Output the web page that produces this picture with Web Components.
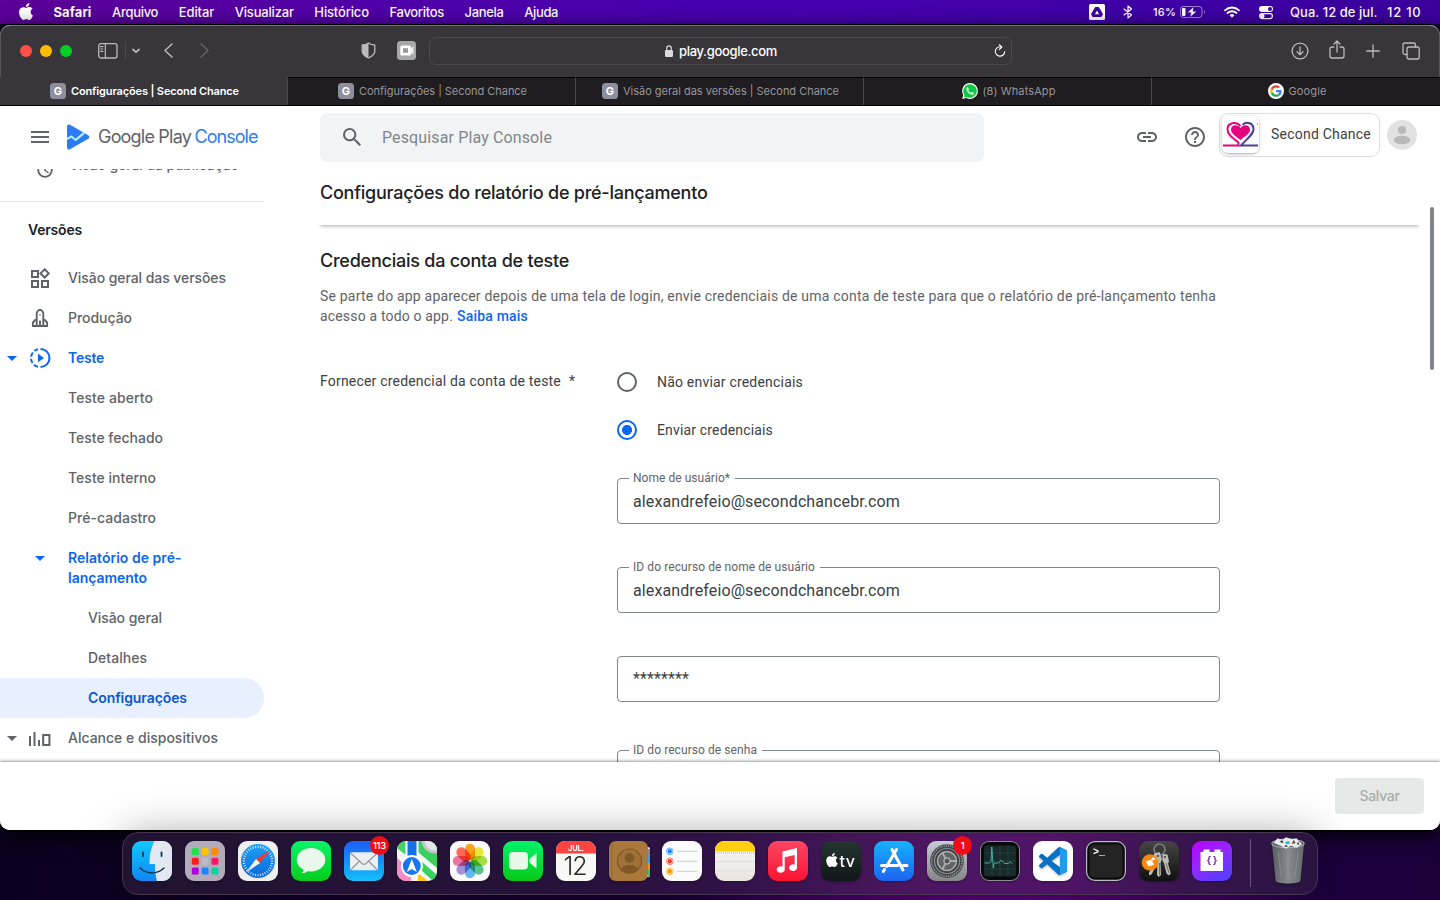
<!DOCTYPE html>
<html lang="pt-BR">
<head>
<meta charset="utf-8">
<title>Configurações | Second Chance</title>
<style>
html,body{margin:0;height:100%;overflow:hidden}
body{font-family:Inter,"Liberation Sans",sans-serif}
</style>
</head>
<body>
<mac-desktop></mac-desktop>
<script>
const APPLE='<path d="M12.152 6.896c-.948 0-2.415-1.078-3.96-1.04-2.04.027-3.91 1.183-4.961 3.014-2.117 3.675-.546 9.103 1.519 12.09 1.013 1.454 2.208 3.09 3.792 3.039 1.52-.065 2.09-.987 3.935-.987 1.831 0 2.35.987 3.96.948 1.637-.026 2.676-1.48 3.676-2.948 1.156-1.688 1.636-3.325 1.662-3.415-.039-.013-3.182-1.221-3.22-4.857-.026-3.04 2.48-4.494 2.597-4.559-1.429-2.09-3.623-2.324-4.39-2.376-2-.156-3.675 1.09-4.61 1.09zM15.53 3.83c.843-1.012 1.4-2.427 1.245-3.83-1.207.052-2.662.805-3.532 1.818-.78.896-1.454 2.338-1.273 3.714 1.338.104 2.715-.688 3.559-1.701"/>';
const S='fill="none" stroke="currentColor" stroke-linecap="round" stroke-linejoin="round"';
/* name: [width, height, markup] ; the viewBox equals the drawn size unless a fourth entry names one */
const ICONS={
apple:[16,17,APPLE,'1 0 22 24'],
drive:[16,16,'<rect width="16" height="16" rx="1.5" fill="#fff"/><path d="M6.2 3h3.6L14 10.2 12.3 13H3.7L2 10.2z" fill="#3c009e"/><path d="M8 6.4l2.2 3.8H5.8z" fill="#fff"/>'],
bluetooth:[10,14,`<path d="M1 4l7.500 6L5 13V1l3.500 3L1 10" ${S} stroke-width="1.2"/>`],
battery:[26,12,'<rect x=".5" y=".5" width="21.500" height="11" rx="3" fill="none" stroke="#fff" stroke-opacity=".5"/><rect x="2" y="2" width="3.500" height="8" rx="1" fill="#fff"/><path d="M24 4v4c1.200-.6 1.200-3.400 0-4z" fill="#fff" opacity=".5"/><path d="M14 .5L7 6.700h4L9.800 11.500 17 5.300h-4z" fill="#fff" stroke="#3f00a6" stroke-width=".6"/>'],
wifi:[16,12,`<path d="M1 4.300a10.200 10.200 0 0 1 14 0M3.500 7a6.600 6.600 0 0 1 9 0" ${S} stroke-width="1.800"/><path d="M8 11.700L5.500 9.200a3.600 3.600 0 0 1 5 0z" fill="currentColor"/>`],
control:[14,13,'<rect width="14" height="6" rx="3" fill="#fff"/><circle cx="11" cy="3" r="2" fill="#3f00a6"/><rect x=".6" y="7.600" width="12.800" height="5" rx="2.500" fill="none" stroke="#fff" stroke-width="1.200"/><circle cx="3.300" cy="10.100" r="2.300" fill="#fff"/>'],
panel:[20,16,`<rect x=".7" y=".7" width="18.300" height="14.300" rx="2.200" ${S} stroke-width="1.300"/><path d="M7.300 1v14M2.600 3.700h2.300M2.600 6h2.300M2.600 8.300h2.300" ${S} stroke-width="1.200"/>`],
chevDown:[8,6,`<path d="M1 1.500l3 2.700 3-2.700" ${S} stroke-width="1.700"/>`],
back:[9,15,`<path d="M8 1L1 7.500 8 14" ${S} stroke-width="1.500"/>`],
fwd:[9,15,`<path d="M1 1l7 6.500L1 14" ${S} stroke-width="1.500"/>`],
shield:[15,17,`<path d="M7.500 1C9.500 2.500 11.500 3 13.800 3v6c0 3-2.500 5.400-6.300 7C3.700 14.400 1.200 12 1.200 9V3C3.500 3 5.500 2.500 7.500 1z" ${S} stroke-width="1.300"/><path d="M7.500 1C5.500 2.500 3.500 3 1.200 3v6c0 3 2.500 5.400 6.300 7z" fill="currentColor"/>`],
cam:[19,19,'<rect width="19" height="19" rx="3.500" fill="#a7a6a8"/><rect x="3.300" y="4.500" width="10.700" height="10" rx="1.500" fill="#fff"/><path d="M13.500 8L16.500 5v9l-3-3z" fill="#eee"/><rect x="6" y="7.200" width="5" height="4.600" fill="#9a999b"/>'],
lock:[8,12,'<rect x="0" y="5" width="8" height="7" rx="1.300" fill="currentColor"/><path d="M1.700 5.500V3.200a2.300 2.300 0 0 1 4.600 0v2.300" fill="none" stroke="currentColor" stroke-width="1.200"/>'],
reload:[12,13,`<path d="M7.500 3A4.700 4.700 0 1 0 10.700 7.500M5.300 .6L7.900 3.100 5.300 5.500" ${S} stroke-width="1.100"/>`],
download:[18,18,`<circle cx="9" cy="9" r="7.900" ${S} stroke-width="1.300"/><path d="M9 5v7.500M6 9.800l3 2.900 3-2.900" ${S} stroke-width="1.300"/>`],
share:[16,19,`<path d="M5 7H3a2 2 0 0 0-2 2v7a2 2 0 0 0 2 2h10a2 2 0 0 0 2-2V9a2 2 0 0 0-2-2h-2M8 12V1.200M5 4l3-3 3 3" ${S} stroke-width="1.300"/>`],
plus:[14,14,`<path d="M7 .8v12.400M.8 7h12.400" ${S} stroke-width="1.300"/>`],
tabs:[18,18,`<rect x="5" y="5" width="12.200" height="12" rx="2" ${S} stroke-width="1.300"/><path d="M5 12.500H3a2 2 0 0 1-2-2V3a2 2 0 0 1 2-2h8.500a2 2 0 0 1 2 2v2" ${S} stroke-width="1.300"/>`],
whatsapp:[16,16,'<path d="M8 0a8 8 0 1 1-3.700 15.100L.2 16l1-4A8 8 0 0 1 8 0z" fill="#fff"/><path d="M8 1.200a6.800 6.800 0 1 1-3.400 12.700l-2.800.7.700-2.700A6.800 6.800 0 0 1 8 1.200z" fill="#12c945"/><path d="M5.700 4.300c-.9.200-1.500 1.200-1 2.600.7 2 2.200 3.700 4.500 4.600 1.300.5 2.600-.1 2.700-1.400L10 9.100l-.9 1C7.700 9.500 6.800 8.600 6.200 7.300l.7-.9z" fill="#fff"/>'],
google:[16,16,'<circle cx="24" cy="24" r="24" fill="#fff"/><g transform="translate(6.500 6.500) scale(.73)"><path fill="#EA4335" d="M24 9.500c3.540 0 6.710 1.220 9.210 3.600l6.850-6.850C35.900 2.380 30.470 0 24 0 14.620 0 6.510 5.380 2.560 13.220l7.980 6.190C12.430 13.720 17.740 9.500 24 9.500z"/><path fill="#4285F4" d="M46.980 24.550c0-1.570-.15-3.090-.38-4.550H24v9.020h12.940c-.58 2.960-2.260 5.480-4.780 7.180l7.730 6c4.510-4.180 7.090-10.360 7.090-17.650z"/><path fill="#FBBC05" d="M10.530 28.590c-.48-1.450-.76-2.990-.76-4.590s.27-3.140.76-4.590l-7.980-6.190C.92 16.460 0 20.120 0 24c0 3.880.92 7.540 2.560 10.780l7.970-6.190z"/><path fill="#34A853" d="M24 48c6.480 0 11.930-2.130 15.890-5.810l-7.730-6c-2.150 1.450-4.920 2.300-8.160 2.300-6.260 0-11.570-4.220-13.470-9.910l-7.980 6.190C6.510 42.620 14.620 48 24 48z"/></g>','0 0 48 48'],
menu:[18,12,'<path d="M0 0h18v2H0zM0 5h18v2H0zM0 10h18v2H0z" fill="currentColor"/>'],
play:[23,26,'<path d="M0 2.500C0 .8 1.600-.1 3 .7l18.200 10.500c1.500.9 1.500 2.700 0 3.600L3 25.300C1.600 26.100 0 25.200 0 23.500z" fill="#2a7bf6"/><path d="M0 13.800l4.500-2.600 4 3.600L15.800 8.400l2.200 1.300L8.700 17.200 4.400 13.700 0 15.900z" fill="#b5f1ff"/>'],
search:[18,18,'<path d="M15.500 14h-.79l-.28-.27A6.471 6.471 0 0 0 16 9.500 6.500 6.500 0 1 0 9.500 16c1.610 0 3.090-.59 4.230-1.570l.27.28v.79l5 4.990L20.490 19l-4.990-5zm-6 0C7.010 14 5 11.990 5 9.500S7.010 5 9.500 5 14 7.010 14 9.500 11.990 14 9.500 14z" fill="currentColor"/>','3 3 17.500 17.500'],
link:[20,10,'<path d="M3.900 12c0-1.710 1.390-3.100 3.100-3.100h4V7H7c-2.760 0-5 2.240-5 5s2.240 5 5 5h4v-1.900H7c-1.710 0-3.100-1.390-3.100-3.100zM8 13h8v-2H8v2zm9-6h-4v1.900h4c1.710 0 3.100 1.390 3.100 3.100s-1.390 3.100-3.100 3.100h-4V17h4c2.760 0 5-2.240 5-5s-2.240-5-5-5z" fill="currentColor"/>','2 7 20 10'],
help:[20,20,'<path d="M11 18h2v-2h-2v2zm1-16C6.480 2 2 6.480 2 12s4.480 10 10 10 10-4.480 10-10S17.520 2 12 2zm0 18c-4.410 0-8-3.590-8-8s3.590-8 8-8 8 3.590 8 8-3.590 8-8 8zm0-14c-2.210 0-4 1.790-4 4h2c0-1.100.9-2 2-2s2 .9 2 2c0 2-3 1.750-3 5h2c0-2.250 3-2.500 3-5 0-2.210-1.790-4-4-4z" fill="currentColor"/>','2 2 20 20'],
heart:[37,37,`<rect width="37" height="37" rx="6" fill="#fff"/><path d="M18.500 24C12 19 9 17 9 13.500c0-5 6.500-6 9.500-1.500 3-4.500 9.500-3.500 9.500 1.500 0 3.500-3 5.500-9.500 10.500z" fill="#e6007e"/><path d="M1 29.500h15.500v-3C9 20.500 5.500 18 5.500 13.200 5.500 6.800 14 5 18.500 10" fill="none" stroke="#e6007e" stroke-width="2"/><path d="M20.500 8.800C25 5 31.500 7 31.500 13.200c0 4.800-5 8-12.500 16.300h17" fill="none" stroke="#4a3c97" stroke-width="2"/><path d="M35 7h1v1.500h-1z" fill="#8889b5"/>`],
avatar:[30,30,'<circle cx="15" cy="15" r="15" fill="#e2e2e2"/><circle cx="15" cy="10" r="4" fill="#b9b9b9"/><ellipse cx="15" cy="20" rx="8.300" ry="4.300" fill="#b9b9b9"/>'],
clock:[16,16,`<circle cx="8" cy="8" r="6.800" ${S} stroke-width="1.800"/><path d="M8 4v4.500l3 2" ${S} stroke-width="1.500"/>`],
widgets:[20,20,'<path d="M2 3h6v6H2zM2 13h6v6H2zM12 13h6v6h-6zM14.600 1.300l4.100 4.100-4.100 4.100-4.100-4.100z" fill="none" stroke="currentColor" stroke-width="2"/>'],
rocket:[18,20,'<path d="M5.700 18V6C5.700 3.500 7.500 2 9 2s3.300 1.500 3.300 4v12M5.700 10.500L1.900 14.500V18h14.200v-3.500l-3.800-4M9 12.500v5.500" fill="none" stroke="currentColor" stroke-width="1.900"/><circle cx="9" cy="7" r=".8" fill="currentColor"/>'],
teste:[20,20,`<path d="M10.500 1a9 9 0 0 1 0 18" fill="none" stroke="currentColor" stroke-width="2"/><path d="M8 18.800a9 9 0 0 1-7-8.800 9 9 0 0 1 7-8.800" fill="none" stroke="currentColor" stroke-width="2" stroke-dasharray="4.500 2.200"/><path d="M8 5.800v8.400l6-4.200z" fill="currentColor"/>`],
reach:[22,15,'<path d="M1 5v10M5.500 1v14M10 9v6" stroke="currentColor" stroke-width="2" fill="none"/><rect x="14.200" y="4" width="6.200" height="10" fill="none" stroke="currentColor" stroke-width="2"/>'],
caret:[10,5,'<path d="M0 0h10L5 5z" fill="currentColor"/>']
};
const ID=(()=>{let n=0;return()=>'g'+(n++)})();
function define(name,html,setup){
  const t=document.createElement('template');t.innerHTML=html;
  customElements.define(name,class extends HTMLElement{
    connectedCallback(){
      if(this.shadowRoot)return;
      const r=this.attachShadow({mode:'open'});
      r.append(document.importNode(t.content,true));
      if(setup)setup.call(this,r);
    }
  });
}
const svg=([w,h,m,vb])=>`<svg width="${w}" height="${h}" viewBox="${vb||`0 0 ${w} ${h}`}" fill="currentColor">${m}</svg>`;

define('mac-desktop',`<style>
:host{display:flex;flex-direction:column;width:1440px;height:900px;overflow:hidden;
background:linear-gradient(90deg,#0c0020,#16002f 30%,#1d0040 60%,#520078 70%,#3c0064 78%,#1d0040 92%,#1b003c)}
.dock{flex:1;display:flex;justify-content:center;align-items:flex-start;padding-top:2px;position:relative;
background:radial-gradient(ellipse 330px 60px at 1000px 75px,#6d0090 0,#4b0070 50%,transparent 100%)}
</style><menu-bar></menu-bar><browser-window></browser-window><div class="dock"><app-dock></app-dock></div>`);

define('menu-bar',`<style>
:host{display:flex;align-items:center;height:24px;color:#fff;font-size:13px;font-weight:500;line-height:24px;
background:linear-gradient(90deg,#5b0098,#4f00ab 30%,#4600b0 55%,#3f00a6 80%,#3b009c)}
nav{display:flex;gap:20.600px;margin-left:19.500px;flex:1}
.st{display:flex;align-items:center;margin-right:18.500px}
ui-icon{margin-left:18px;margin-top:-1px}.st ui-icon{margin-left:0;margin-top:0}
</style>
<ui-icon name="apple"></ui-icon>
<nav><fit-text w="38" style="font-weight:700">Safari</fit-text><fit-text w="46">Arquivo</fit-text><fit-text w="35.500">Editar</fit-text><fit-text w="59">Visualizar</fit-text><fit-text w="54.500">Histórico</fit-text><fit-text w="54.500">Favoritos</fit-text><fit-text w="39">Janela</fit-text><fit-text w="34">Ajuda</fit-text></nav>
<div class="st"><ui-icon name="drive"></ui-icon><ui-icon name="bluetooth" style="margin-left:18px"></ui-icon><fit-text w="23" style="margin-left:20px;font-size:11px">16%</fit-text><ui-icon name="battery" style="margin-left:4px"></ui-icon><ui-icon name="wifi" style="margin-left:18px"></ui-icon><ui-icon name="control" style="margin-left:19px"></ui-icon><fit-text w="87.500" style="margin-left:17px">Qua. 12 de jul.</fit-text><fit-text w="34.500" style="margin-left:9.500px">12 10</fit-text></div>`);

define('ui-icon',`<style>:host{display:block;flex:none}svg{display:block;overflow:visible}</style>`,function(r){
  r.append(document.createRange().createContextualFragment(svg(ICONS[this.getAttribute('name')])));
});

define('browser-window',`<style>
:host{display:flex;flex-direction:column;height:805px;margin-top:1px;border-radius:10px;overflow:hidden;background:#fff;box-shadow:0 0 0 1px #000,0 6px 22px #000;flex:none}
</style><browser-toolbar></browser-toolbar><tab-strip></tab-strip><play-console></play-console>`);

define('browser-toolbar',`<style>
:host{display:flex;align-items:center;height:52px;background:#38363a;color:#bcbabd;box-sizing:border-box;border-top:1px solid #757377;padding-bottom:2px;border-radius:10px 10px 0 0;box-shadow:inset 1px 0 #565458,inset -1px 0 #565458}
i{display:block;width:12px;height:12px;border-radius:50%;margin-right:8px}
.url{display:flex;align-items:center;width:583px;height:28px;box-sizing:border-box;border:1px solid #4c4a4e;border-radius:7px;margin-left:13px;font-size:13px;font-weight:500;color:#fff}
.mid{flex:1;display:flex;align-items:center;justify-content:center;padding-left:18px}
</style>
<i style="background:#ff5047;margin-left:20px"></i><i style="background:#febc00"></i><i style="background:#05cf27"></i>
<ui-icon name="panel" style="margin-left:18px"></ui-icon>
<span style="width:1px;height:18px;background:#4b494d;margin-left:7px"></span>
<ui-icon name="chevDown" style="margin-left:6px"></ui-icon>
<ui-icon name="back" style="margin-left:24px"></ui-icon>
<ui-icon name="fwd" style="margin-left:27px;color:#656367"></ui-icon>
<ui-icon name="shield" style="margin-left:152px"></ui-icon>
<ui-icon name="cam" style="margin-left:21px"></ui-icon>
<div class="url"><div class="mid"><ui-icon name="lock" style="margin-right:6px;color:#dcdadd"></ui-icon><fit-text w="98">play.google.com</fit-text></div><ui-icon name="reload" style="margin-right:5px"></ui-icon></div>
<ui-icon name="download" style="margin-left:279px"></ui-icon>
<ui-icon name="share" style="margin-left:20px;margin-top:-3px"></ui-icon>
<ui-icon name="plus" style="margin-left:21px"></ui-icon>
<ui-icon name="tabs" style="margin-left:22px"></ui-icon>`);

define('tab-strip',`<style>
:host{display:grid;grid-template-columns:repeat(5,1fr);height:28px;background:#1f1d20;border-bottom:1px solid #000;flex:none}
</style>
<browser-tab active><b slot="i">G</b><fit-text w="168">Configurações | Second Chance</fit-text></browser-tab>
<browser-tab><b slot="i">G</b><fit-text w="168">Configurações | Second Chance</fit-text></browser-tab>
<browser-tab><b slot="i">G</b><fit-text w="216">Visão geral das versões | Second Chance</fit-text></browser-tab>
<browser-tab><ui-icon slot="i" name="whatsapp"></ui-icon><fit-text w="73">(8) WhatsApp</fit-text></browser-tab>
<browser-tab><ui-icon slot="i" name="google"></ui-icon><fit-text w="38">Google</fit-text></browser-tab>`);
define('browser-tab',`<style>
:host{display:flex;align-items:center;justify-content:center;gap:5px;font-size:11px;font-weight:400;color:#98969a;line-height:26px;border-top:1px solid #000;border-right:1px solid #4a484c;box-sizing:border-box;padding:0 0 1px 2px;height:28px;overflow:hidden}
:host([active]){background:#38363a;color:#fff;font-weight:600;border-top-color:#38363a}
:host(:last-of-type){border-right:0}
::slotted(b){width:16px;height:16px;border-radius:3.500px;background:#8e8e9e;color:#fff;font:700 11px/17px Inter,sans-serif;text-align:center}
</style><slot name="i"></slot><slot></slot>`);

define('play-console',`<style>
:host{display:flex;flex-direction:column;flex:1;min-height:0;background:#fff}
.body{display:flex;flex:1;min-height:0;overflow:hidden}
main{flex:1;min-width:0;padding-left:50px;overflow:hidden;position:relative}
settings-page{margin-left:6px}
.bar{position:absolute;right:6px;top:38px;width:4px;height:163px;border-radius:2px;background:#80868b}
</style><console-header></console-header><div class="body"><side-nav></side-nav><main><settings-page></settings-page><div class="bar"></div></main></div><save-bar></save-bar>`);

define('console-header',`<style>
:host{display:flex;align-items:flex-start;height:63px;color:#5f6368;flex:none;box-sizing:border-box;padding-top:7px}
.logo{display:flex;align-items:center;width:300px;height:48px;padding-left:31px;box-sizing:border-box;flex:none;font:400 18px/48px Inter,sans-serif;margin-right:20px}
.search{display:flex;align-items:center;width:664px;height:49px;background:#f1f3f4;border-radius:8px;font:400 16px/49px Roboto,sans-serif;color:#80868b;box-sizing:border-box;padding-left:23px}
.app{display:flex;align-items:center;width:161px;height:44px;box-sizing:border-box;border:1px solid #dadce0;border-radius:9px;font:400 14px/40px Roboto,sans-serif;color:#3c4043;margin:0 7px 0 14px;padding-bottom:2px}
.t{border-radius:7px;box-shadow:0 1px 3px rgba(0,0,0,.35);margin:1px 12px 0 2px}
</style>
<div class="logo"><ui-icon name="menu"></ui-icon><ui-icon name="play" style="margin:0 8px 0 18px"></ui-icon><fit-text w="93">Google Play</fit-text><fit-text w="63" style="color:#2a7bf6;margin-left:3.500px">Console</fit-text></div>
<div class="search"><ui-icon name="search" style="color:#5f6368;margin-right:21px;margin-top:-2px"></ui-icon><fit-text w="170">Pesquisar Play Console</fit-text></div>
<ui-icon name="link" style="margin:19px 0 0 153px"></ui-icon><ui-icon name="help" style="margin:14px 0 0 28px"></ui-icon>
<div class="app"><ui-icon class="t" name="heart"></ui-icon><fit-text w="100">Second Chance</fit-text></div><ui-icon name="avatar" style="margin-top:7px"></ui-icon>`);

define('side-nav',`<style>
:host{display:block;width:264px;flex:none;overflow:hidden}
.in{margin-top:-24px}
hr{border:0;height:1px;background:#e3e5e9;margin:16px 0 8px}
h2{margin:0 0 8px;padding-left:28px;font:600 14px/40px Inter,sans-serif;color:#202124}
</style><div class="in">
<nav-item icon="clock" pub><fit-text w="170">Visão geral da publicação</fit-text></nav-item><hr>
<h2><fit-text w="54">Versões</fit-text></h2>
<nav-item icon="widgets"><fit-text w="158">Visão geral das versões</fit-text></nav-item>
<nav-item icon="rocket"><fit-text w="64">Produção</fit-text></nav-item>
<nav-item icon="teste" caret on><fit-text w="36">Teste</fit-text></nav-item>
<nav-item><fit-text w="85">Teste aberto</fit-text></nav-item>
<nav-item><fit-text w="95">Teste fechado</fit-text></nav-item>
<nav-item><fit-text w="88">Teste interno</fit-text></nav-item>
<nav-item><fit-text w="88">Pré-cadastro</fit-text></nav-item>
<nav-item icon="caret" on><fit-text w="113.500">Relatório de pré-</fit-text><br><fit-text w="79">lançamento</fit-text></nav-item>
<nav-item deep><fit-text w="74">Visão geral</fit-text></nav-item>
<nav-item deep><fit-text w="59">Detalhes</fit-text></nav-item>
<nav-item deep sel><fit-text w="99">Configurações</fit-text></nav-item>
<nav-item icon="reach" caret><fit-text w="150">Alcance e dispositivos</fit-text></nav-item></div>`);
define('nav-item',`<style>
:host{display:flex;min-height:40px;padding:10px 0;box-sizing:border-box;color:#5f6368;font:500 14px/20px Inter,sans-serif}
:host([on]){color:#0b66f0;font-weight:600}
:host([sel]){background:#e8effe;color:#0b57d0;border-radius:0 20px 20px 0;font-weight:600}
.c{width:24px;height:20px;display:flex;align-items:center;justify-content:center}
.i{width:32px;height:20px;display:flex;align-items:center;justify-content:center;margin-right:12px}
:host([deep]) .i{width:52px}
:host([pub]) .i{padding-left:9px;width:32px;margin-right:13px;box-sizing:border-box;padding-top:9px}
</style><div class="c"></div><div class="i"></div><div><slot></slot></div>`,function(r){
  const n=this.getAttribute('icon');
  if(n)r.querySelector('.i').innerHTML=`<ui-icon name="${n}"></ui-icon>`;
  if(this.hasAttribute('caret'))r.querySelector('.c').innerHTML='<ui-icon name="caret"></ui-icon>';
});

define('settings-page',`<style>
:host{display:block;color:#202124;font:400 14px/20px Roboto,sans-serif}
h1,h2{margin:0;font:500 18px/24px Inter,sans-serif}
h1{padding:12px 0 20px;width:1100px}
.edge{height:4px;width:1103px;margin:0 0 -4px -2px;background:linear-gradient(#c9c9c9,#e0e0e0 45%,#fff);-webkit-mask:linear-gradient(90deg,transparent,#000 5px,#000 1098px,transparent)}
h2{margin-top:24px}
p{margin:13px 0 0;color:#5f6368}
a{color:#0b66f0;font-weight:500}
.row{display:flex;margin-top:44px}
.lab{width:297px;flex:none;padding-top:1px;color:#3c4043}
.f{width:603px}
outlined-field{margin-bottom:43px}
</style>
<h1><fit-text w="387.500">Configurações do relatório de pré-lançamento</fit-text></h1><div class="edge"></div>
<h2><fit-text w="249">Credenciais da conta de teste</fit-text></h2>
<p><fit-text w="896">Se parte do app aparecer depois de uma tela de login, envie credenciais de uma conta de teste para que o relatório de pré-lançamento tenha</fit-text><br><fit-text w="133">acesso a todo o app.</fit-text><a><fit-text w="71" style="margin-left:4px">Saiba mais</fit-text></a></p>
<div class="row"><div class="lab"><fit-text w="241">Fornecer credencial da conta de teste</fit-text><span style="margin-left:8px">*</span></div>
<div class="f"><radio-option><fit-text w="146">Não enviar credenciais</fit-text></radio-option>
<radio-option checked><fit-text w="116">Enviar credenciais</fit-text></radio-option>
<outlined-field><fit-text slot="l" w="97">Nome de usuário*</fit-text><fit-text w="267">alexandrefeio@secondchancebr.com</fit-text></outlined-field>
<outlined-field><fit-text slot="l" w="182">ID do recurso de nome de usuário</fit-text><fit-text w="267">alexandrefeio@secondchancebr.com</fit-text></outlined-field>
<outlined-field bare><fit-text w="56">********</fit-text></outlined-field>
<outlined-field style="margin-top:48px"><fit-text slot="l" w="124">ID do recurso de senha</fit-text></outlined-field>
</div></div>`);
define('radio-option',`<style>
:host{display:flex;align-items:center;height:20px;margin:2px 0 28px;gap:20px;color:#3c4043}
i{width:20px;height:20px;box-sizing:border-box;border:2px solid #5f6368;border-radius:50%;display:block}
:host([checked]){margin-bottom:38px;margin-top:0}
:host([checked]) i{border-color:#0b66f0;background:radial-gradient(circle,#0b66f0 0 4.700px,transparent 5.300px)}
</style><i></i><slot></slot>`);
define('outlined-field',`<style>
:host{display:block;height:46px;box-sizing:border-box;border:1px solid #80868b;border-radius:4px;position:relative;font:400 16px/46px Roboto,sans-serif;color:#3c4043;padding:0 15px}
.l{position:absolute;left:11px;top:-9px;background:#fff;padding:0 5px 0 4px;font:400 12px/16px Roboto,sans-serif;color:#5f6368}
:host([bare]){line-height:44px}
:host([bare]) .l{display:none}
</style><div class="l"><slot name="l"></slot></div><slot></slot>`);
define('save-bar',`<style>
:host{display:flex;justify-content:flex-end;align-items:flex-start;height:68px;padding:16px 16px 0;box-sizing:border-box;background:#fff;box-shadow:0 -1px 3px rgba(0,0,0,.4);flex:none;position:relative;z-index:1}
button{width:89px;height:36px;border:0;border-radius:4px;background:#e7e9e8;color:#aaacae;font:500 14px/36px Inter,sans-serif;padding:0}
</style><button><fit-text w="40">Salvar</fit-text></button>`);

const squircle=(fill)=>`<rect width="40" height="40" rx="9" fill="${fill}"/>`;
const grad=(id,a,b)=>`<linearGradient id="${id}" x2="0" y2="1"><stop stop-color="${a}"/><stop offset="1" stop-color="${b}"/></linearGradient>`;
const petals=['#ff9a10','#ece22c','#9fdc35','#4cc07e','#55b0f0','#9d85d6','#ea6a9c','#ff5a48'].map((c,i)=>`<rect x="15" y="2.800" width="10" height="16.500" rx="5" fill="${c}" style="mix-blend-mode:multiply" opacity=".92" transform="rotate(${i*45} 20 20)"/>`).join('');
const dots=['#1fe04a','#ffc400','#ff8a00','#ff1a1a','#b9bcc4','#ff1668','#b400e0','#1b86ff','#00d6a0'].map((c,i)=>`<rect x="${6.8+(i%3)*9.8}" y="${7+Math.floor(i/3)*9.7}" width="7" height="7" rx="1.500" fill="${c}"/>`).join('');
const ticks=Array.from({length:36},(_,i)=>`<path d="M20 4.500v2.500" stroke="#fff" stroke-width=".8" transform="rotate(${i*10} 20 20)"/>`).join('');
const APPS={
finder:g=>grad(g,'#10c8fc','#1286f5')+squircle(`url(#${g})`)+'<path d="M22.500 0H31a9 9 0 0 1 9 9v22a9 9 0 0 1-9 9h-6c-1.500-5-2-10-2-17h-5.500C17.500 14 19 7 22.500 0z" fill="#e2e7f0"/><path d="M11 11.500v3.500M29.500 11.500v3.500" stroke="#17344f" stroke-width="1.800" stroke-linecap="round"/><path d="M8 27c7 6.500 17 6.500 24 0" fill="none" stroke="#17344f" stroke-width="1.500" stroke-linecap="round"/>',
launch:g=>squircle('#b1abba')+dots,
safari:g=>grad(g,'#1ea2f5','#0a66dd')+squircle('#efefef')+`<circle cx="20" cy="20" r="17" fill="url(#${g})"/>${ticks}<path d="M32.500 9L22 22l-4-4z" fill="#f33a34"/><path d="M8 31.500L22 22l-4-4z" fill="#f4f4f4"/>`,
messages:g=>grad(g,'#0cf468','#05cd1c')+squircle(`url(#${g})`)+'<ellipse cx="20" cy="18.700" rx="14.300" ry="11.700" fill="#e9f8ea"/><path d="M13 27c.2 2-.8 4-2.500 5.300 3 0 5.500-1 7-3z" fill="#e9f8ea"/>',
mail:g=>grad(g,'#1d5df5','#14c1fd')+squircle(`url(#${g})`)+'<rect x="6" y="11.300" width="28" height="18" rx="2" fill="#eceff2"/><path d="M7 12.500l11 10c1.300 1 2.700 1 4 0l11-10M7 28.500l8.500-8.500M33 28.500L24.500 20" fill="none" stroke="#9298a0" stroke-width="1.200"/>',
maps:g=>`<clipPath id="${g}"><rect width="40" height="40" rx="9"/></clipPath><g clip-path="url(#${g})"><rect width="40" height="40" fill="#f4f5f3"/><path d="M0 17l14 12v11H0z" fill="#f58cc5"/><path d="M0 7l10 8V0H0z" fill="#45d264"/><path d="M21 0h19v27L21 11z" fill="#3ad05d"/><circle cx="38" cy="-1" r="12" fill="#e4e6e9" stroke="#c3c6cb" stroke-width="3"/><path d="M24 20l16 14v6h-4L22 27z" fill="#37d160"/><path d="M21 32l10 8H21z" fill="#ffc814"/><rect x="8.500" y="0" width="13" height="20" fill="#fff"/><rect x="10.500" y="0" width="9" height="18" fill="#1570ea"/><circle cx="14.800" cy="25" r="11" fill="#fff"/><circle cx="14.800" cy="25" r="9" fill="#1877ee"/><path d="M14.800 18l5 13-5-3-5 3z" fill="#fff"/></g>`,
photos:g=>squircle('#fbfbfb')+`<g style="isolation:isolate">${petals}</g>`,
facetime:g=>grad(g,'#05f36a','#05c916')+squircle(`url(#${g})`)+'<rect x="6" y="11" width="19" height="17.500" rx="4" fill="#e7f7e8"/><path d="M26.500 18L33.500 12v15.500L26.500 21.500z" fill="#e7f7e8"/>',
calendar:g=>squircle('#f8f8f7')+'<path d="M0 12.500V9a9 9 0 0 1 9-9h22a9 9 0 0 1 9 9v3.500z" fill="#fb4540"/><text x="12" y="9.600" font-family="Inter,sans-serif" font-weight="700" font-size="7.500" fill="#fff" textLength="16">JUL.</text><text x="7.500" y="34" font-family="Inter,sans-serif" font-weight="300" font-size="25" fill="#2b2b2b" textLength="24">12</text>',
contacts:g=>'<rect x="30" y="6" width="11" height="30" rx="2" fill="#eee"/><path d="M39 8h2v7h-2z" fill="#8a8a8a"/><path d="M39 15h2v7h-2z" fill="#2fa3e7"/><path d="M39 22h2v7h-2z" fill="#f5901f"/><path d="M39 29h2v6h-2z" fill="#3bc063"/><rect width="39" height="40" rx="7" fill="#a9793b"/><path d="M3 1v38" stroke="#94682f"/><circle cx="20.500" cy="20" r="12" fill="#a07138" stroke="#7d5625" stroke-width="1.200"/><circle cx="20.500" cy="17" r="4.800" fill="#815823"/><path d="M12 28.500c2-6 15-6 17 0a12 12 0 0 1-17 0z" fill="#815823"/>',
reminders:g=>squircle('#fbfbfb')+['#1a84ff','#ff3b30','#ff9500'].map((c,i)=>`<circle cx="7.800" cy="${10.300+i*10}" r="3.300" fill="#fff" stroke="${c}" stroke-width=".7"/><circle cx="7.800" cy="${10.300+i*10}" r="2.200" fill="${c}"/><path d="M15 ${10.300+i*10}h20.500" stroke="#cfcfd1"/>`).join(''),
notes:g=>grad(g,'#f8f7f5','#e9e6e1')+squircle(`url(#${g})`)+'<path d="M0 10.500V9a9 9 0 0 1 9-9h22a9 9 0 0 1 9 9v1.500z" fill="#ffcf12"/><path d="M0 12h40" stroke="#b6b2aa" stroke-dasharray="1 1"/><path d="M0 20.500h40M0 30h40" stroke="#dad8d4" stroke-width=".7"/>',
music:g=>grad(g,'#fc4663','#fb1432')+squircle(`url(#${g})`)+'<path d="M14.500 10.500L29 7v19.500a4 3.300 0 1 1-2.300-2.800V14l-10 2.300v12.200a4 3.300 0 1 1-2.200-2.900z" fill="#fff"/>',
tv:g=>grad(g,'#26362f','#10161a')+squircle(`url(#${g})`)+`<svg x="4.500" y="11.500" width="13" height="15" viewBox="1 0 22 24" fill="#fff">${APPLE}</svg><text x="18.500" y="25.500" font-family="Inter,sans-serif" font-weight="500" font-size="16" fill="#fff" textLength="15.500">tv</text>`,
store:g=>grad(g,'#16b2fb','#1c64f0')+squircle(`url(#${g})`)+'<path d="M18 8.500l11 20.500M22.500 8.500L12.500 25.500M7.500 24.500h16M29 24.500h4M10.500 28.500l-1.200 2" stroke="#fff" stroke-width="3" stroke-linecap="round"/>',
prefs:g=>grad(g,'#c4ccd5','#85858a')+squircle(`url(#${g})`)+`<circle cx="20" cy="20" r="16.800" fill="#47494b"/><circle cx="20" cy="20" r="15.300" fill="none" stroke="#999c9e" stroke-width="1.500" stroke-dasharray="1.100 1.100"/><circle cx="20" cy="20" r="12.500" fill="#3b3d3f" stroke="#8d9092" stroke-width="1.200"/><circle cx="20" cy="20" r="9.500" fill="#626466" stroke="#a9abad" stroke-width="1.600"/><path d="M20 20h10M20 20l-5-8.700M20 20l-5 8.700" stroke="#a9abad" stroke-width="2"/><circle cx="20" cy="20" r="3" fill="#505254" stroke="#a9abad" stroke-width="1.300"/>`,
activity:g=>squircle('#8b8d90')+'<rect x="1" y="1" width="38" height="38" rx="8" fill="#08090a"/><rect x="4" y="4.500" width="32" height="31" rx="3" fill="#182a2a"/><path d="M4 12h32M4 20h32M4 28h32M12 5v30M20 5v30M28 5v30" stroke="#29504d" stroke-width=".6"/><path d="M4.500 22h5l1.500-1.500L11.800 6l1.500 21 1-5h4.500l2.500-3 3 3.500h4l2-1.500 2 1.500" fill="none" stroke="#4dbba7" stroke-width=".9"/>',
code:g=>squircle('#fff')+'<svg x="6" y="6" width="28" height="28" viewBox="0 0 24 24"><path d="M23.150 2.587L18.210.21a1.494 1.494 0 0 0-1.705.29l-9.460 8.630-4.120-3.128a.999.999 0 0 0-1.276.057L.327 7.261A1 1 0 0 0 .326 8.740L3.899 12 .326 15.260a1 1 0 0 0 .001 1.479L1.650 17.940a.999.999 0 0 0 1.276.057l4.120-3.128 9.460 8.630a1.492 1.492 0 0 0 1.704.29l4.942-2.377A1.500 1.500 0 0 0 24 20.060V3.939a1.500 1.500 0 0 0-.85-1.352zm-5.146 14.861L10.826 12l7.178-5.448v10.896z" fill="#0971c3"/><path d="M18 .2l5.150 2.400A1.500 1.500 0 0 1 24 3.900v16.200a1.500 1.500 0 0 1-.85 1.300L18 23.800z" fill="#1f9bf0"/></svg>',
terminal:g=>squircle('#b6bcc2')+'<rect x="1.200" y="1.200" width="37.600" height="37.600" rx="8" fill="#0b0b0b"/><rect x="3.500" y="3.500" width="33" height="33" rx="5" fill="#242424"/><text x="7" y="14" font-family="Liberation Mono,monospace" font-weight="700" font-size="10" fill="#fff" textLength="12">&gt;_</text>',
keys:g=>grad(g,'#464646','#101010')+squircle(`url(#${g})`)+'<circle cx="20.500" cy="8.500" r="5.500" fill="none" stroke="#7c7c80" stroke-width="1.700"/><path d="M15 12.500l5.500-1.500 2.500 7-1.500 4 .5 12-2.500 2-1.500-2 .3-12-3.300-4zM23.500 13l5 .5 1.500 7-1 2 2.800 10-2 2-2.300-2-2.500-10-1.500-3zM15 22l2.500 2-5 9.500-2.300.8-.4-2z" fill="#bdbbb4"/><path d="M20.500 22v12M27 22l3 10" stroke="#5f5c58" stroke-width=".8"/><circle cx="18.800" cy="15" r="1" fill="#333"/><circle cx="26" cy="16" r="1" fill="#333"/><circle cx="11" cy="21.500" r="8.300" fill="#f78810"/><path d="M7.500 20.500l5-1.500 2 4.500-5 1.500zM12.500 19.500l.5-2a1.700 1.700 0 0 1 3 1" fill="#fff" stroke="#fff" stroke-width=".8"/>',
lego:g=>`<linearGradient id="${g}" x2=".6" y2="1"><stop stop-color="#b800ff"/><stop offset=".5" stop-color="#9726ff"/><stop offset="1" stop-color="#5a3cff"/></linearGradient>`+squircle(`url(#${g})`)+'<path d="M8.500 11h3V8.500h6V11h5V8.500h6V11h2.500v19h-22.500z" fill="#fff"/><text x="14.500" y="22.600" font-family="Inter,sans-serif" font-weight="700" font-size="10" fill="#6b2bbd" textLength="11">{ }</text>',
trash:g=>`<linearGradient id="${g}"><stop stop-color="#5c6264"/><stop offset=".5" stop-color="#8d9294"/><stop offset="1" stop-color="#6a6f73"/></linearGradient><path d="M3 2h34l-4 40c-1 3.500-25 3.500-26 0z" fill="url(#${g})" opacity=".95"/><ellipse cx="20" cy="2.500" rx="17" ry="4.500" fill="#53585c" stroke="#adb2b5" stroke-width="1.200"/><path d="M5 2l4-5 5 2 4-3 6 2 5-1 2 3 4 3-6 4-6-2-5 3-6-3z" fill="#e9ecee"/><path d="M11 1l3-2 1 3zM26-1l2 3-4 1zM18 4l2 2h-4zM31 1l1 3-3-1z" fill="#35383c"/><path d="M17 1l4-1 1 3h-4z" fill="#22b8c9"/><path d="M24 1l3 1-2 2z" fill="#e0803e"/><path d="M10 12l3 27M20 13v27M31 10l-4 29" stroke="#aab0b2" stroke-width=".7" opacity=".5"/>`
};
define('app-dock',`<style>
:host{display:flex;align-items:center;width:1196px;height:63px;box-sizing:border-box;border:1px solid #463650;border-radius:16px;padding:0 8.500px 6px;gap:13px;
background:linear-gradient(90deg,#211331,#25123a 35%,#301246 50%,#4b1660 66%,#511468 78%,#3a1450 88%,#291440);box-shadow:0 6px 44px rgba(0,0,0,.42);position:relative;z-index:2}
.sep{width:1px;height:48px;background:#6d5580;margin:5px 5.500px 0 5px}
</style>`,function(r){
  const badge={mail:'113',prefs:'1'};
  let h='';
  for(const k of Object.keys(APPS)){
    if(k==='trash')h+='<div class="sep"></div>';
    h+=`<dock-icon app="${k}"${badge[k]?` badge="${badge[k]}"`:''}></dock-icon>`;
  }
  r.append(document.createRange().createContextualFragment(h));
});
define('dock-icon',`<style>
:host{display:block;width:40px;height:40px;position:relative;flex:none}
svg{display:block;overflow:visible;filter:drop-shadow(0 1px 1px rgba(0,0,0,.3))}
.b{position:absolute;right:-5.500px;top:-4.500px;width:19px;height:19px;border-radius:50%;background:#ee0e17;color:#fff;font:500 9.500px/19px Inter,sans-serif;text-align:center;letter-spacing:-.2px}
</style>`,function(r){
  const k=this.getAttribute('app'),b=this.getAttribute('badge'),t=k==='trash';
  r.append(document.createRange().createContextualFragment(`<svg width="${t?38:40}" height="${t?45:40}" viewBox="${t?'0 -2 40 47':'0 0 40 40'}"${t?' style="margin:-2px 0 0 0"':''}>${APPS[k](ID())}</svg>`+(b?`<div class="b">${b}</div>`:'')));
});
/* A run of text whose tracking is set so that it takes the width given in w */
define('fit-text',`<style>:host{display:inline-block;white-space:nowrap}</style><slot></slot>`,function(){
  const nat=this.getBoundingClientRect().width,n=this.textContent.length;
  if(nat&&n)this.style.letterSpacing=((+this.getAttribute('w')-nat)/n).toFixed(3)+'px';
});
</script>
</body>
</html>
